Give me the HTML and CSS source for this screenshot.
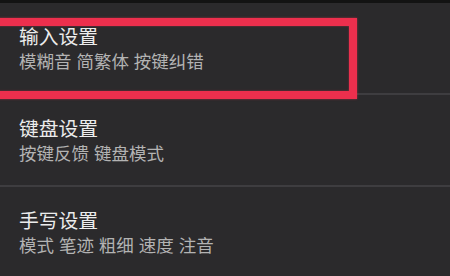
FILE: index.html
```html
<!DOCTYPE html>
<html lang="zh-CN">
<head>
    <meta charset="UTF-8">
    <meta name="viewport" content="width=device-width, initial-scale=1.0">
    <title>设置</title>
    <link rel="stylesheet" href="styles.css">
</head>
<body>
    <div class="topbar"></div>

    <div class="settings">
        <div class="item">
            <div class="title">输入设置</div>
            <div class="summary">模糊音 简繁体 按键纠错</div>
        </div>
        <div class="item">
            <div class="title">键盘设置</div>
            <div class="summary">按键反馈 键盘模式</div>
        </div>
        <div class="item">
            <div class="title">手写设置</div>
            <div class="summary">模式 笔迹 粗细 速度 注音</div>
        </div>
    </div>

    <div class="highlight"></div>
</body>
</html>
```

FILE: styles.css
```css
body {
    font-family: "Noto Sans CJK SC", "Noto Sans", sans-serif;
    margin: 0;
    padding: 0;
    background-color: #2b2a2c;
    width: 450px;
    height: 276px;
    overflow: hidden;
    position: relative;
}
.topbar {
    height: 3px;
    background-color: #131313;
}
.item {
    height: 90px;
    padding-left: 19px;
    border-bottom: 2px solid #3e3d40;
}
.title {
    padding-top: 20px;
    font-size: 19.8px;
    line-height: 26px;
    color: #ececec;
}
.summary {
    margin-top: 1px;
    font-size: 17.5px;
    line-height: 22px;
    color: #b3b3b3;
    word-spacing: 1px;
}
.highlight {
    position: absolute;
    left: -20px;
    top: 18px;
    width: 361px;
    height: 65px;
    border: 8px solid #ec2f4d;
    box-shadow: 0 0 2px rgba(236, 47, 77, 0.6), inset 0 0 2px rgba(236, 47, 77, 0.6);
}
```
